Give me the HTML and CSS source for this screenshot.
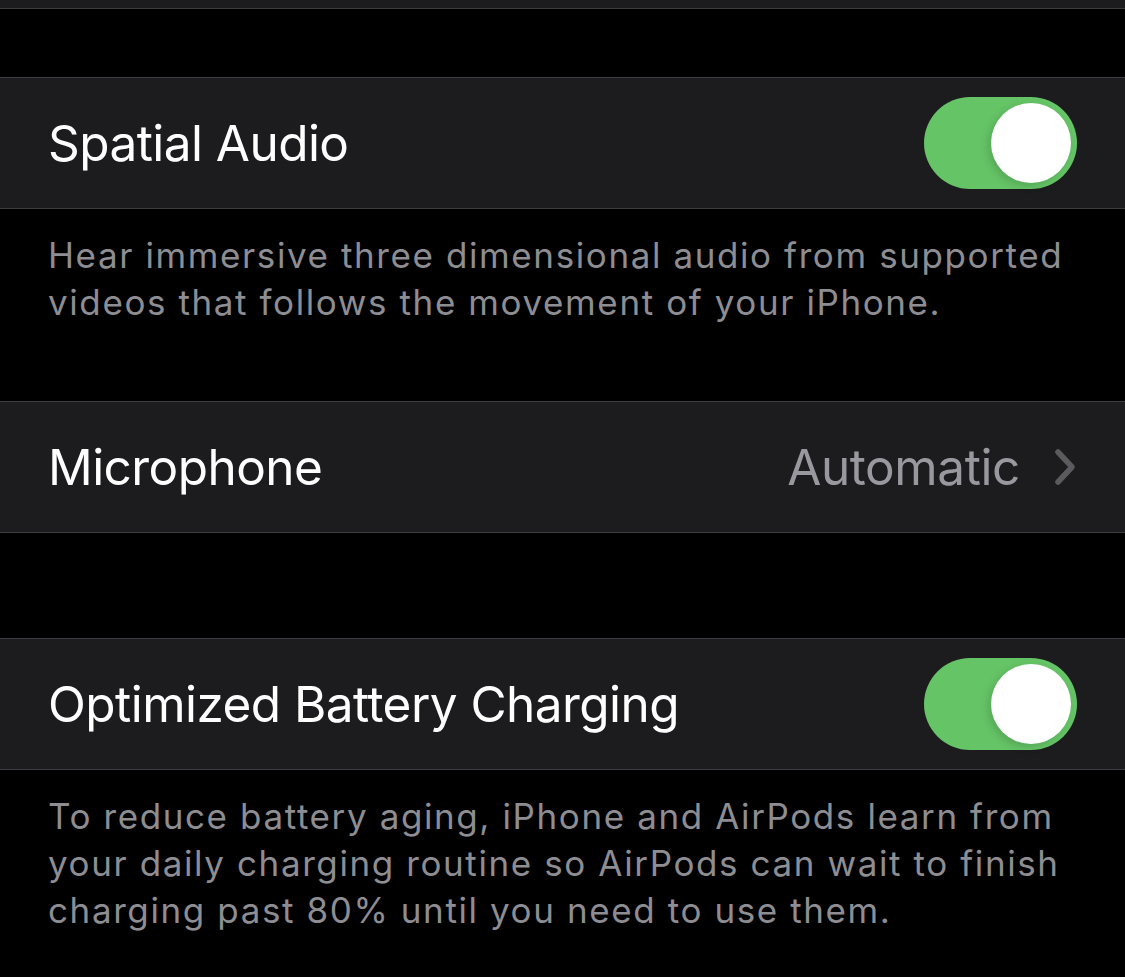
FILE: index.html
```html
<!DOCTYPE html>
<html lang="en">
<head>
    <meta charset="UTF-8">
    <title>AirPods Settings</title>
    <link rel="stylesheet" href="styles.css">
</head>
<body>

<div class="group group-stub">
    <div class="cell cell-stub"></div>
</div>

<div class="group group-first">
    <div class="cell">
        <span class="label">Spatial Audio</span>
        <div class="toggle on"><div class="knob"></div></div>
    </div>
</div>
<p class="footer">Hear immersive three dimensional audio from supported<br>videos that follows the movement of your iPhone.</p>

<div class="group group-mic">
    <div class="cell">
        <span class="label">Microphone</span>
        <div class="detail">
            <span class="value">Automatic</span>
            <svg class="chevron" width="24" height="38" viewBox="0 0 24 38">
                <path d="M5 4 L19 19 L5 34" fill="none" stroke="#5b5b5f" stroke-width="5.5" stroke-linecap="round" stroke-linejoin="round"/>
            </svg>
        </div>
    </div>
</div>

<div class="group group-battery">
    <div class="cell">
        <span class="label">Optimized Battery Charging</span>
        <div class="toggle on"><div class="knob"></div></div>
    </div>
</div>
<p class="footer">To reduce battery aging, iPhone and AirPods learn from<br>your daily charging routine so AirPods can wait to finish<br>charging past 80% until you need to use them.</p>

</body>
</html>
```

FILE: styles.css
```css
body {
    font-family: Inter, "Noto Sans", sans-serif;
    background-color: #000;
    margin: 0;
    padding: 0;
    color: #fff;
}
.group {
    background-color: #1c1c1e;
    border-top: 1px solid #3d3d40;
    border-bottom: 1px solid #3d3d40;
}
.group-stub {
    border-top: none;
}
.group-first {
    margin-top: 68px;
}
.group-mic {
    margin-top: 75px;
}
.group-battery {
    margin-top: 105px;
}
.cell {
    height: 130px;
    display: flex;
    align-items: center;
    justify-content: space-between;
    padding: 0 48px 0 48px;
}
.cell-stub {
    height: 8px;
}
.label {
    font-size: 49.5px;
    letter-spacing: -0.55px;
}
.detail {
    display: flex;
    align-items: center;
    gap: 33px;
}
.value {
    font-size: 49.5px;
    letter-spacing: -0.4px;
    color: #98989e;
}
.chevron {
    display: block;
}
.toggle {
    width: 153px;
    height: 92px;
    border-radius: 46px;
    background-color: #3a3a3c;
    display: flex;
    align-items: center;
    padding: 0 6px;
    box-sizing: border-box;
}
.toggle.on {
    background-color: #65c466;
    justify-content: flex-end;
}
.knob {
    width: 80px;
    height: 80px;
    border-radius: 50%;
    background-color: #fff;
    box-shadow: -3px 3px 8px rgba(0, 0, 0, 0.15);
}
.footer {
    margin: 0;
    padding: 23px 10px 0 48px;
    font-size: 35px;
    line-height: 47px;
    letter-spacing: 1.6px;
    color: #8d8d92;
}
```
